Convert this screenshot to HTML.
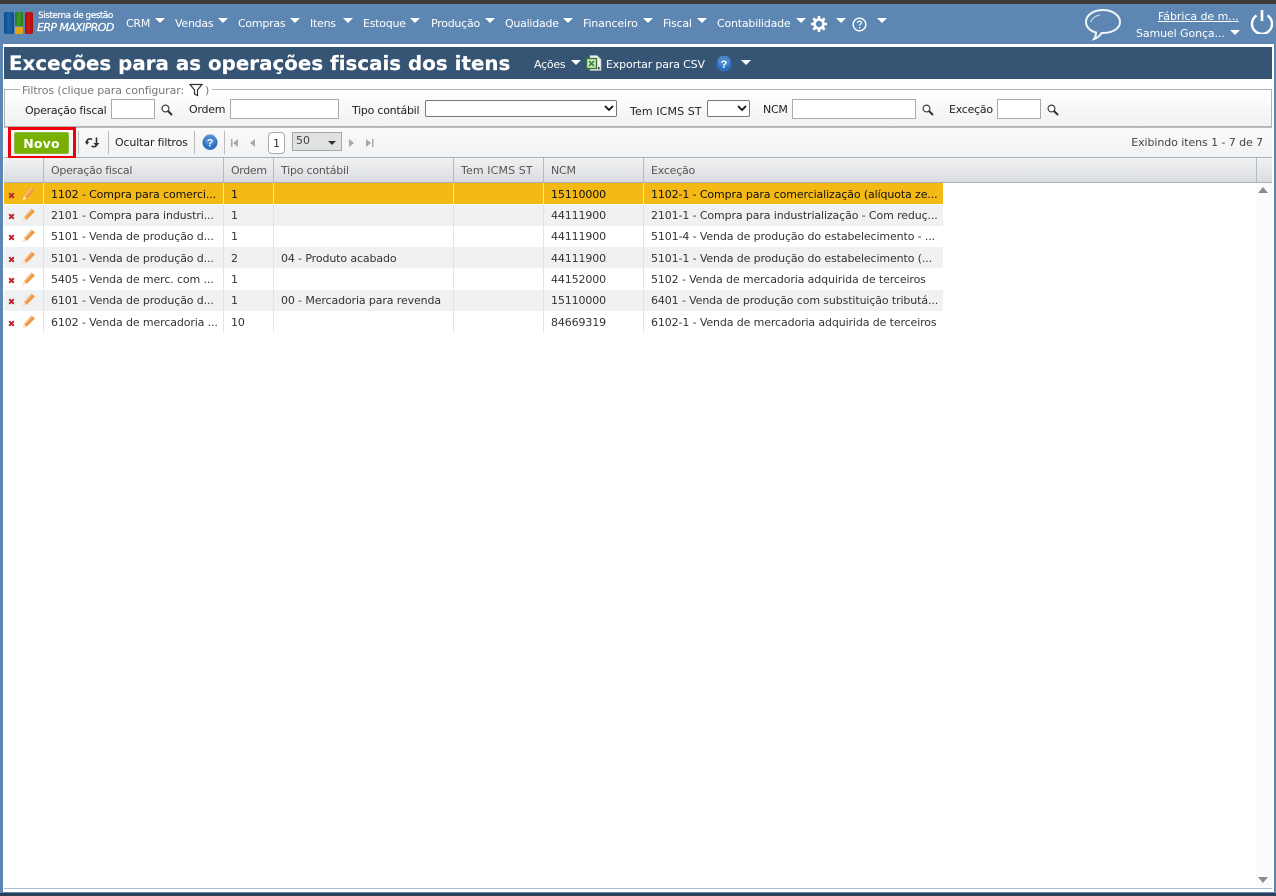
<!DOCTYPE html>
<html><head><meta charset="utf-8"><style>
html,body{margin:0;padding:0;width:1276px;height:896px;overflow:hidden;background:#fff}
body{font-family:"DejaVu Sans",Verdana,sans-serif;font-size:11px;color:#333;position:relative}
.a,.t,svg.a{position:absolute}
.t{white-space:nowrap;line-height:14px}
.n{color:#fff;top:17px;font-size:11px;letter-spacing:-.25px}
.ar{position:absolute;width:0;height:0;border-left:5px solid transparent;border-right:5px solid transparent;border-top:5px solid #fff}
.l{color:#222;letter-spacing:-.25px}
.i{position:absolute;box-sizing:border-box;background:#fff;border:1px solid #aaa;height:20px;top:99px}
.h{color:#555;top:164px;letter-spacing:-.22px}
.c{color:#333;letter-spacing:-.12px}
.v{position:absolute;width:1px;background:#b4bcc2;top:158px;height:24px}
.rv{position:absolute;width:1px;background:#e2e4e6;top:183px;height:149px}
.s{position:absolute;width:1px;background:#b9bdc0;top:131px;height:23px}
</style></head><body>
<div class="a" style="left:0;top:0;width:1276px;height:4px;background:#3b3b3b"></div>
<div class="a" style="left:0;top:4px;width:1276px;height:40px;background:#5d87b2"></div>
<div class="a" style="left:0;top:44px;width:3px;height:848px;background:#5d87b2"></div>
<div class="a" style="left:1274px;top:44px;width:2px;height:848px;background:#5d87b2"></div>
<div class="a" style="left:0;top:892px;width:1276px;height:1px;background:#5d87b2"></div>
<div class="a" style="left:0;top:893px;width:1276px;height:3px;background:#2a4058"></div>
<div class="a" style="left:4px;top:888px;width:1268px;height:1px;background:#a9bdd2"></div>

<div class="a" style="left:4px;top:12px;width:10px;height:22px;background:linear-gradient(90deg,#0b4a86,#1d66ad,#0b4a86);border-radius:2px"></div>
<div class="a" style="left:15px;top:12px;width:8px;height:14px;background:linear-gradient(90deg,#2b7a1c,#3f9a2a,#2b7a1c);border-radius:1px"></div>
<div class="a" style="left:15px;top:27px;width:8px;height:7px;background:#e3a516;border-radius:1px"></div>
<div class="a" style="left:25px;top:12px;width:8px;height:22px;background:linear-gradient(90deg,#a80d0d,#d01818,#a80d0d);border-radius:2px"></div>
<div class="t" style="left:38px;top:10px;color:#fff;font-size:9px;letter-spacing:-.52px;line-height:12px;-webkit-text-stroke:.2px #fff">Sistema de gestão</div>
<div class="t" style="left:37px;top:21px;color:#fff;font-size:11px;font-style:italic;letter-spacing:-.6px;-webkit-text-stroke:.2px #fff">ERP MAXIPROD</div>

<div class="t n" style="left:126px">CRM</div><div class="ar" style="left:155px;top:18px"></div>
<div class="t n" style="left:175px">Vendas</div><div class="ar" style="left:218px;top:18px"></div>
<div class="t n" style="left:238px">Compras</div><div class="ar" style="left:290px;top:18px"></div>
<div class="t n" style="left:310px">Itens</div><div class="ar" style="left:343px;top:18px"></div>
<div class="t n" style="left:363px">Estoque</div><div class="ar" style="left:410px;top:18px"></div>
<div class="t n" style="left:431px">Produção</div><div class="ar" style="left:485px;top:18px"></div>
<div class="t n" style="left:505px">Qualidade</div><div class="ar" style="left:563px;top:18px"></div>
<div class="t n" style="left:583px;letter-spacing:-.15px">Financeiro</div><div class="ar" style="left:643px;top:18px"></div>
<div class="t n" style="left:663px">Fiscal</div><div class="ar" style="left:697px;top:18px"></div>
<div class="t n" style="left:717px;letter-spacing:-.2px">Contabilidade</div><div class="ar" style="left:796px;top:18px"></div>
<svg class="a" style="left:811px;top:16px" width="16" height="16" viewBox="0 0 16 16"><g stroke="#fff" stroke-width="2.6"><path d="M8 0v16M0 8h16M2.300 2.300l11.400 11.400M13.700 2.300L2.300 13.700"/></g><circle cx="8" cy="8" r="4.600" fill="none" stroke="#fff" stroke-width="2.400"/><circle cx="8" cy="8" r="3.200" fill="#5d87b2"/></svg>
<div class="ar" style="left:836px;top:18px"></div>
<svg class="a" style="left:852px;top:17px" width="15" height="15" viewBox="0 0 15 15"><circle cx="7.500" cy="7.500" r="6.300" fill="none" stroke="#fff" stroke-width="1.400"/><path d="M5.600 6c0-2.500 3.900-2.500 3.900-.2 0 1.400-2 1.500-2 3" fill="none" stroke="#fff" stroke-width="1.100"/><rect x="7" y="10" width="1.200" height="1.300" fill="#fff"/></svg>
<div class="ar" style="left:877px;top:18px"></div>

<svg class="a" style="left:1084px;top:8px" width="38" height="33" viewBox="0 0 38 33"><path d="M19 2C9.500 2 2 7 2 14c0 5 4 9 10 10.500 0 2.500-.5 4.500-2 6.500 3.500-1 6-3.500 7.500-6 .5 0 1 0 1.500 0 9.500 0 17-4.500 17-11S28.500 2 19 2z" fill="none" stroke="#f1f5f9" stroke-width="2"/><path d="M7 14c1-4 5-6.500 9-7" fill="none" stroke="#c5d5e5" stroke-width="1.200"/></svg>
<div class="t" style="left:1158px;top:10px;color:#fff;text-decoration:underline;letter-spacing:-.05px">Fábrica de m...</div>
<div class="t" style="left:1136px;top:27px;color:#fff;letter-spacing:-.1px">Samuel Gonça...</div>
<div class="ar" style="left:1230px;top:30px"></div>
<svg class="a" style="left:1250px;top:9px" width="24" height="25" viewBox="0 0 24 25"><path d="M6.500 6.500a10 10 0 1 0 11 0" fill="none" stroke="#fff" stroke-width="2.400"/><path d="M12 1v11" stroke="#fff" stroke-width="2.600"/></svg>

<div class="a" style="left:4px;top:47px;width:1268px;height:32px;background:#365473"></div>
<div class="t" style="left:9px;top:51px;color:#fff;font-size:19.800px;font-weight:bold;line-height:25px;letter-spacing:.04px;-webkit-text-stroke:.2px #fff">Exceções para as operações fiscais dos itens</div>
<div class="t" style="left:534px;top:58px;color:#fff;letter-spacing:-.25px">Ações</div><div class="ar" style="left:571px;top:60px"></div>
<svg class="a" style="left:586px;top:55px" width="16" height="16" viewBox="0 0 16 16"><path d="M4 .5h7l4 4v11H4z" fill="#f2f2f2" stroke="#bbb" stroke-width=".6"/><rect x=".5" y="3.500" width="10" height="10" fill="#cfe5c3" stroke="#2f7d32" stroke-width="1.400"/><path d="M3 6l5 5M8 6l-5 5" stroke="#2f7d32" stroke-width="1.500"/><rect x="12" y="12" width="1.500" height="2.500" fill="#333"/></svg>
<div class="t" style="left:606px;top:58px;color:#fff;letter-spacing:-.15px">Exportar para CSV</div>
<svg class="a" style="left:716px;top:56px" width="16" height="16" viewBox="0 0 16 16"><circle cx="8" cy="8" r="7.500" fill="#2f6fc0"/><circle cx="8" cy="5" r="6" fill="#6a9fe0" opacity=".5"/><text x="8" y="12" font-family="Liberation Sans" font-size="11" font-weight="bold" fill="#fff" text-anchor="middle">?</text></svg>
<div class="ar" style="left:741px;top:60px"></div>

<div class="a" style="box-sizing:border-box;left:4px;top:89px;width:1268px;height:38px;border:1px solid #b2b2b2;background:linear-gradient(#fff,#f0f1f2)"></div>
<div class="a" style="left:20px;top:84px;width:192px;height:14px;background:#fff"></div>
<div class="t" style="left:22px;top:84px;color:#777;letter-spacing:-.1px">Filtros (clique para configurar:</div>
<svg class="a" style="left:189px;top:83px" width="14" height="14" viewBox="0 0 14 14"><path d="M1 1.500h12L8.500 7v5.500L5.500 11V7z" fill="#fff" stroke="#333" stroke-width="1.200"/></svg>
<div class="t" style="left:205px;top:84px;color:#777">)</div>

<div class="t l" style="left:25px;top:104px">Operação fiscal</div>
<div class="i" style="left:111px;width:44px"></div>
<div class="t l" style="left:189px;top:103px">Ordem</div>
<div class="i" style="left:230px;width:109px"></div>
<div class="t l" style="left:352px;top:104px">Tipo contábil</div>
<div class="i" style="left:425px;top:100px;width:192px;height:17px;border-color:#777;border-radius:2px"></div>
<svg class="a" style="left:604px;top:105px" width="10" height="7" viewBox="0 0 10 7"><path d="M1 1l4 4 4-4" fill="none" stroke="#111" stroke-width="1.800"/></svg>
<div class="t l" style="left:630px;top:105px;letter-spacing:.12px">Tem ICMS ST</div>
<div class="i" style="left:707px;top:100px;width:43px;height:17px;border-color:#777;border-radius:2px"></div>
<svg class="a" style="left:737px;top:105px" width="10" height="7" viewBox="0 0 10 7"><path d="M1 1l4 4 4-4" fill="none" stroke="#111" stroke-width="1.800"/></svg>
<div class="t l" style="left:763px;top:103px">NCM</div>
<div class="i" style="left:792px;width:124px"></div>
<div class="t l" style="left:949px;top:103px">Exceção</div>
<div class="i" style="left:997px;width:44px"></div>
<svg width="0" height="0" style="position:absolute"><defs><g id="m"><circle cx="4.500" cy="4.500" r="3.400" fill="#fff" stroke="#444" stroke-width="1.200"/><path d="M7 7l4 4" stroke="#333" stroke-width="2"/></g><g id="p"><path d="M.5 13.500l1.500-4.500 7.500-8.500 3.500 3-8 8z" fill="#ee9a45"/><path d="M2 9l7.500-8.500 1 1L3 10z" fill="#f6bd85"/><path d="M.5 13.500L2 9l2.500 2.500z" fill="#fbe6d0"/></g><g id="x"><path d="M1.200 1.200l4.600 4.600M5.800 1.200L1.200 5.800" stroke="#b9262c" stroke-width="2"/></g></defs></svg>
<svg class="a" style="left:161px;top:104px" width="12" height="12"><use href="#m"/></svg>
<svg class="a" style="left:922px;top:104px" width="12" height="12"><use href="#m"/></svg>
<svg class="a" style="left:1047px;top:104px" width="12" height="12"><use href="#m"/></svg>

<div class="a" style="left:4px;top:127px;width:1268px;height:31px;background:linear-gradient(#fafafa,#f1f2f3);border-top:1px solid #bbb;box-sizing:border-box;border-bottom:1px solid #aab2b8"></div>
<div class="a" style="box-sizing:border-box;left:8px;top:127px;width:68px;height:32px;border:3px solid #f00008"></div>
<div class="a" style="left:14px;top:132px;width:55px;height:22px;background:#78b000;border:1px solid #8fb84a;box-sizing:border-box;border-radius:2px;color:#fff;font-weight:bold;font-size:12.500px;line-height:21px;text-align:center;letter-spacing:.2px">Novo</div>
<div class="s" style="left:78px"></div>
<svg class="a" style="left:85px;top:136px" width="16" height="13" viewBox="0 0 16 13"><path d="M1.500 6.500C2 3 5 2 7 3.500M11.500 1.500v7c0 2-3 3-5 1.500" fill="none" stroke="#333" stroke-width="1.600"/><path d="M0 6l2-1 2 1-2 3zM8.500 7h6l-3 3.500z" fill="#333"/></svg>
<div class="s" style="left:108px"></div>
<div class="t" style="left:115px;top:136px;color:#222;letter-spacing:-.14px">Ocultar filtros</div>
<div class="s" style="left:194px"></div>
<svg class="a" style="left:202px;top:134px" width="16" height="17" viewBox="0 0 16 16"><circle cx="8" cy="8" r="7.500" fill="#2f6fc0"/><circle cx="8" cy="5" r="6" fill="#6a9fe0" opacity=".5"/><text x="8" y="12" font-family="Liberation Sans" font-size="11" font-weight="bold" fill="#fff" text-anchor="middle">?</text></svg>
<div class="s" style="left:224px"></div>
<svg class="a" style="left:230px;top:138px" width="150" height="10" viewBox="0 0 150 10"><g fill="#a5a8aa"><rect x="1" y="1" width="1.500" height="8"/><path d="M8 1v8L3 5zM25 1v8l-5-4zM119 1v8l5-4zM136 1v8l5-4z"/><rect x="142" y="1" width="1.500" height="8"/></g></svg>
<div class="a" style="box-sizing:border-box;left:268px;top:132px;width:17px;height:22px;background:#fff;border:1px solid #aaa;border-radius:4px;text-align:center;line-height:21px;color:#333">1</div>
<div class="a" style="box-sizing:border-box;left:292px;top:132px;width:50px;height:19px;background:#dfe1e3;border:1px solid #a5a8ab;line-height:15px;padding-left:3px;color:#444">50</div>
<div class="a" style="left:328px;top:141px;border-left:4.500px solid transparent;border-right:4.500px solid transparent;border-top:4.500px solid #333"></div>
<div class="t" style="right:13px;top:136px;color:#444;letter-spacing:-.08px">Exibindo itens 1 - 7 de 7</div>

<div class="a" style="left:4px;top:158px;width:1268px;height:25px;background:linear-gradient(#f0f1f2,#dadde0);border-bottom:1px solid #aab2b8;box-sizing:border-box"></div>
<div class="v" style="left:43px"></div><div class="v" style="left:223px"></div><div class="v" style="left:273px"></div><div class="v" style="left:453px"></div><div class="v" style="left:543px"></div><div class="v" style="left:643px"></div><div class="v" style="left:1256px"></div>
<div class="t h" style="left:51px;letter-spacing:-.27px">Operação fiscal</div><div class="t h" style="left:231px;letter-spacing:-.35px">Ordem</div><div class="t h" style="left:281px">Tipo contábil</div><div class="t h" style="left:461px;letter-spacing:.12px">Tem ICMS ST</div><div class="t h" style="left:551px">NCM</div><div class="t h" style="left:651px">Exceção</div>

<div class="a" style="left:4px;top:183px;width:939px;height:21px;background:#f5b916"></div>
<div class="a" style="left:4px;top:205px;width:939px;height:21px;background:#eff1f2"></div>
<div class="a" style="left:4px;top:247px;width:939px;height:21px;background:#eff1f2"></div>
<div class="a" style="left:4px;top:290px;width:939px;height:21px;background:#eff1f2"></div>
<div class="rv" style="left:43px"></div><div class="rv" style="left:223px"></div><div class="rv" style="left:273px"></div><div class="rv" style="left:453px"></div><div class="rv" style="left:543px"></div><div class="rv" style="left:643px"></div>

<svg class="a" style="left:8px;top:192px" width="7" height="7"><use href="#x"/></svg><svg class="a" style="left:22px;top:187px" width="14" height="14"><use href="#p"/></svg>
<svg class="a" style="left:8px;top:213px" width="7" height="7"><use href="#x"/></svg><svg class="a" style="left:22px;top:208px" width="14" height="14"><use href="#p"/></svg>
<svg class="a" style="left:8px;top:234px" width="7" height="7"><use href="#x"/></svg><svg class="a" style="left:22px;top:229px" width="14" height="14"><use href="#p"/></svg>
<svg class="a" style="left:8px;top:256px" width="7" height="7"><use href="#x"/></svg><svg class="a" style="left:22px;top:251px" width="14" height="14"><use href="#p"/></svg>
<svg class="a" style="left:8px;top:277px" width="7" height="7"><use href="#x"/></svg><svg class="a" style="left:22px;top:272px" width="14" height="14"><use href="#p"/></svg>
<svg class="a" style="left:8px;top:298px" width="7" height="7"><use href="#x"/></svg><svg class="a" style="left:22px;top:293px" width="14" height="14"><use href="#p"/></svg>
<svg class="a" style="left:8px;top:320px" width="7" height="7"><use href="#x"/></svg><svg class="a" style="left:22px;top:315px" width="14" height="14"><use href="#p"/></svg>

<div class="t c" style="left:51px;top:188px;color:#111">1102 - Compra para comerci...</div><div class="t c" style="left:231px;top:188px;color:#111">1</div><div class="t c" style="left:551px;top:188px;color:#111">15110000</div><div class="t c" style="left:651px;top:188px;color:#111">1102-1 - Compra para comercialização (alíquota ze...</div>
<div class="t c" style="left:51px;top:209px">2101 - Compra para industri...</div><div class="t c" style="left:231px;top:209px">1</div><div class="t c" style="left:551px;top:209px">44111900</div><div class="t c" style="left:651px;top:209px">2101-1 - Compra para industrialização - Com reduç...</div>
<div class="t c" style="left:51px;top:230px">5101 - Venda de produção d...</div><div class="t c" style="left:231px;top:230px">1</div><div class="t c" style="left:551px;top:230px">44111900</div><div class="t c" style="left:651px;top:230px">5101-4 - Venda de produção do estabelecimento - ...</div>
<div class="t c" style="left:51px;top:252px">5101 - Venda de produção d...</div><div class="t c" style="left:231px;top:252px">2</div><div class="t c" style="left:281px;top:252px">04 - Produto acabado</div><div class="t c" style="left:551px;top:252px">44111900</div><div class="t c" style="left:651px;top:252px">5101-1 - Venda de produção do estabelecimento (...</div>
<div class="t c" style="left:51px;top:273px">5405 - Venda de merc. com ...</div><div class="t c" style="left:231px;top:273px">1</div><div class="t c" style="left:551px;top:273px">44152000</div><div class="t c" style="left:651px;top:273px">5102 - Venda de mercadoria adquirida de terceiros</div>
<div class="t c" style="left:51px;top:294px">6101 - Venda de produção d...</div><div class="t c" style="left:231px;top:294px">1</div><div class="t c" style="left:281px;top:294px">00 - Mercadoria para revenda</div><div class="t c" style="left:551px;top:294px">15110000</div><div class="t c" style="left:651px;top:294px">6401 - Venda de produção com substituição tributá...</div>
<div class="t c" style="left:51px;top:316px">6102 - Venda de mercadoria ...</div><div class="t c" style="left:231px;top:316px">10</div><div class="t c" style="left:551px;top:316px">84669319</div><div class="t c" style="left:651px;top:316px">6102-1 - Venda de mercadoria adquirida de terceiros</div>

<div class="a" style="left:1256px;top:183px;width:16px;height:705px;background:#fbfbfc"></div>
<div class="a" style="left:1258px;top:187px;border-left:5px solid transparent;border-right:5px solid transparent;border-bottom:6px solid #8c8c8c"></div>
<div class="a" style="left:1258px;top:877px;border-left:5px solid transparent;border-right:5px solid transparent;border-top:6px solid #8c8c8c"></div>
</body></html>
